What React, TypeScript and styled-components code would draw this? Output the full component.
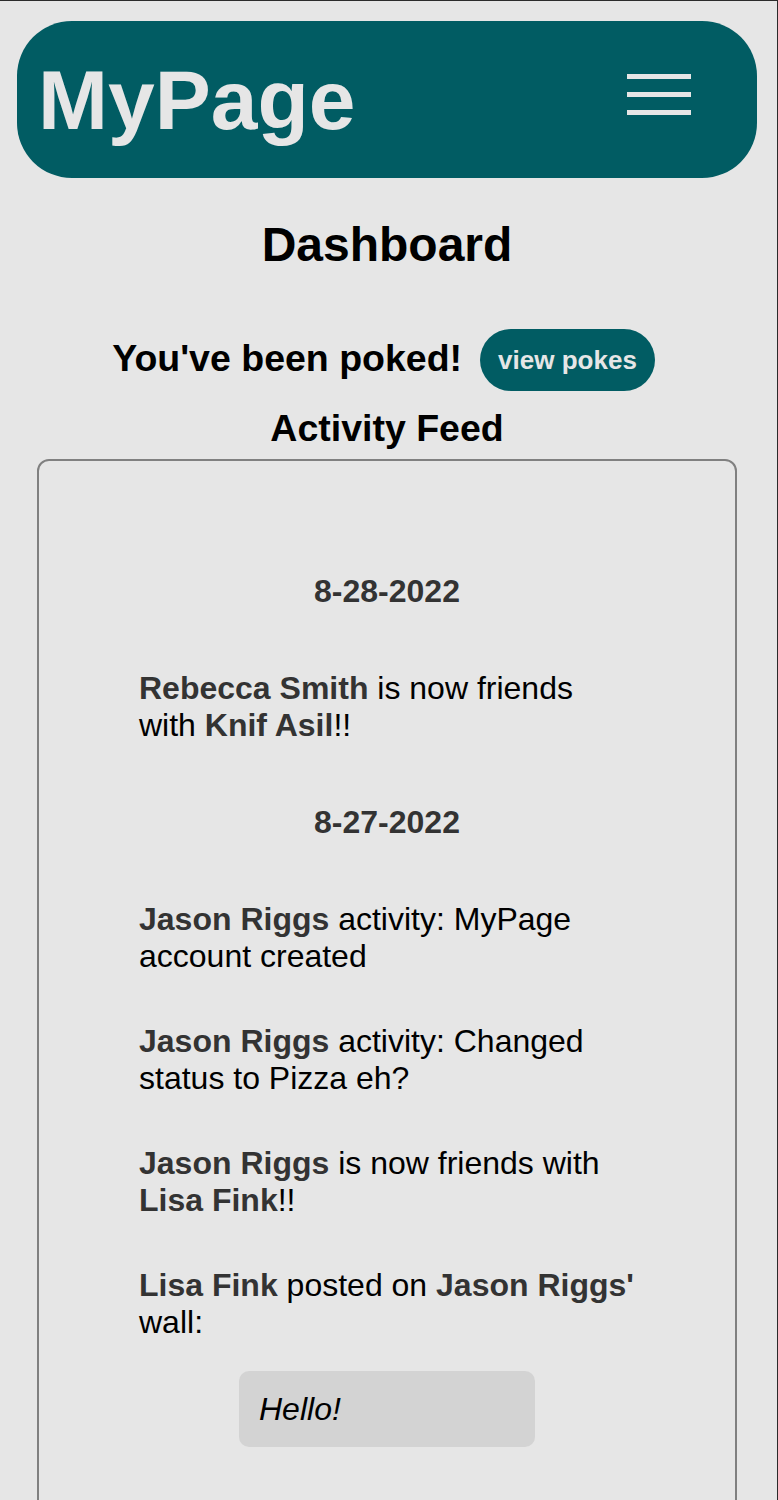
import React from "react";
import styled, { createGlobalStyle } from "styled-components";

const GlobalStyle = createGlobalStyle`
  html {
    background: #e6e6e6;
    border-top: 1px solid #2b2b2b;
    border-right: 1px solid #2b2b2b;
  }
  body {
    margin: 0;
    font-family: "Liberation Sans", Arial, Helvetica, sans-serif;
    color: #000;
  }
`;

const Page = styled.div`
  width: 774px;
  padding: 20px 0 0;
`;

const Header = styled.header`
  height: 157px;
  margin: 0 17px;
  background: #015c63;
  border-radius: 55px;
  display: flex;
  align-items: center;
  justify-content: space-between;
  padding: 0 66px 0 21px;
  box-sizing: border-box;
`;

const Logo = styled.div`
  font-size: 84px;
  font-weight: 700;
  line-height: 1;
  color: #e6e6e6;
`;

const Menu = styled.button`
  display: flex;
  flex-direction: column;
  gap: 13px;
  margin: 0 0 10px;
  padding: 0;
  background: none;
  border: none;
`;

const Bar = styled.span`
  display: block;
  width: 64px;
  height: 5px;
  background: #e6e6e6;
`;

const Title = styled.h1`
  margin: 39px 0 0;
  font-size: 48px;
  font-weight: 700;
  text-align: center;
  line-height: normal;
`;

const PokeRow = styled.div`
  display: flex;
  justify-content: center;
  align-items: center;
  gap: 18px;
  margin-top: 57px;
  padding-right: 7px;
`;

const PokeText = styled.span`
  font-size: 37.5px;
  font-weight: 700;
  line-height: normal;
  margin-top: -3px;
`;

const PokeButton = styled.button`
  height: 62px;
  padding: 0 18px;
  border: none;
  border-radius: 31px;
  background: #015c63;
  color: #e6e6e6;
  font-family: inherit;
  font-size: 26px;
  font-weight: 700;
`;

const FeedTitle = styled.h2`
  margin: 16px 0 9px;
  font-size: 37.5px;
  font-weight: 700;
  text-align: center;
  line-height: normal;
`;

const Feed = styled.section`
  margin: 0 37px;
  border: 2px solid #808080;
  border-radius: 12px;
  padding: 52px 99px 80px;
`;

const DateHeading = styled.h3`
  margin: 60px 0;
  font-size: 32px;
  font-weight: 700;
  color: #333;
  text-align: center;
  line-height: normal;
`;

const Item = styled.p`
  margin: 48px 0 48px 1px;
  font-size: 32px;
  line-height: normal;
  color: #000;
`;

const Name = styled.b`
  color: #333;
`;

const WallPost = styled.div`
  margin: 48px 0;
`;

const WallText = styled(Item)`
  margin: 0 0 0 1px;
`;

const Bubble = styled.div`
  width: 296px;
  box-sizing: border-box;
  margin: 30px auto 0;
  padding: 19.5px 20px;
  border-radius: 10px;
  background: #d3d3d3;
  font-size: 32px;
  font-style: italic;
  line-height: normal;
`;

export default function App() {
  return (
    <>
      <GlobalStyle />
      <Page>
        <Header>
          <Logo>MyPage</Logo>
          <Menu aria-label="menu">
            <Bar />
            <Bar />
            <Bar />
          </Menu>
        </Header>
        <Title>Dashboard</Title>
        <PokeRow>
          <PokeText>You've been poked!</PokeText>
          <PokeButton>view pokes</PokeButton>
        </PokeRow>
        <FeedTitle>Activity Feed</FeedTitle>
        <Feed>
          <DateHeading>8-28-2022</DateHeading>
          <Item>
            <Name>Rebecca Smith</Name> is now friends with <Name>Knif Asil</Name>!!
          </Item>
          <DateHeading>8-27-2022</DateHeading>
          <Item>
            <Name>Jason Riggs</Name> activity: MyPage account created
          </Item>
          <Item>
            <Name>Jason Riggs</Name> activity: Changed status to Pizza eh?
          </Item>
          <Item>
            <Name>Jason Riggs</Name> is now friends with <Name>Lisa Fink</Name>!!
          </Item>
          <WallPost>
            <WallText>
              <Name>Lisa Fink</Name> posted on <Name>Jason Riggs'</Name> wall:
            </WallText>
            <Bubble>Hello!</Bubble>
          </WallPost>
        </Feed>
      </Page>
    </>
  );
}
